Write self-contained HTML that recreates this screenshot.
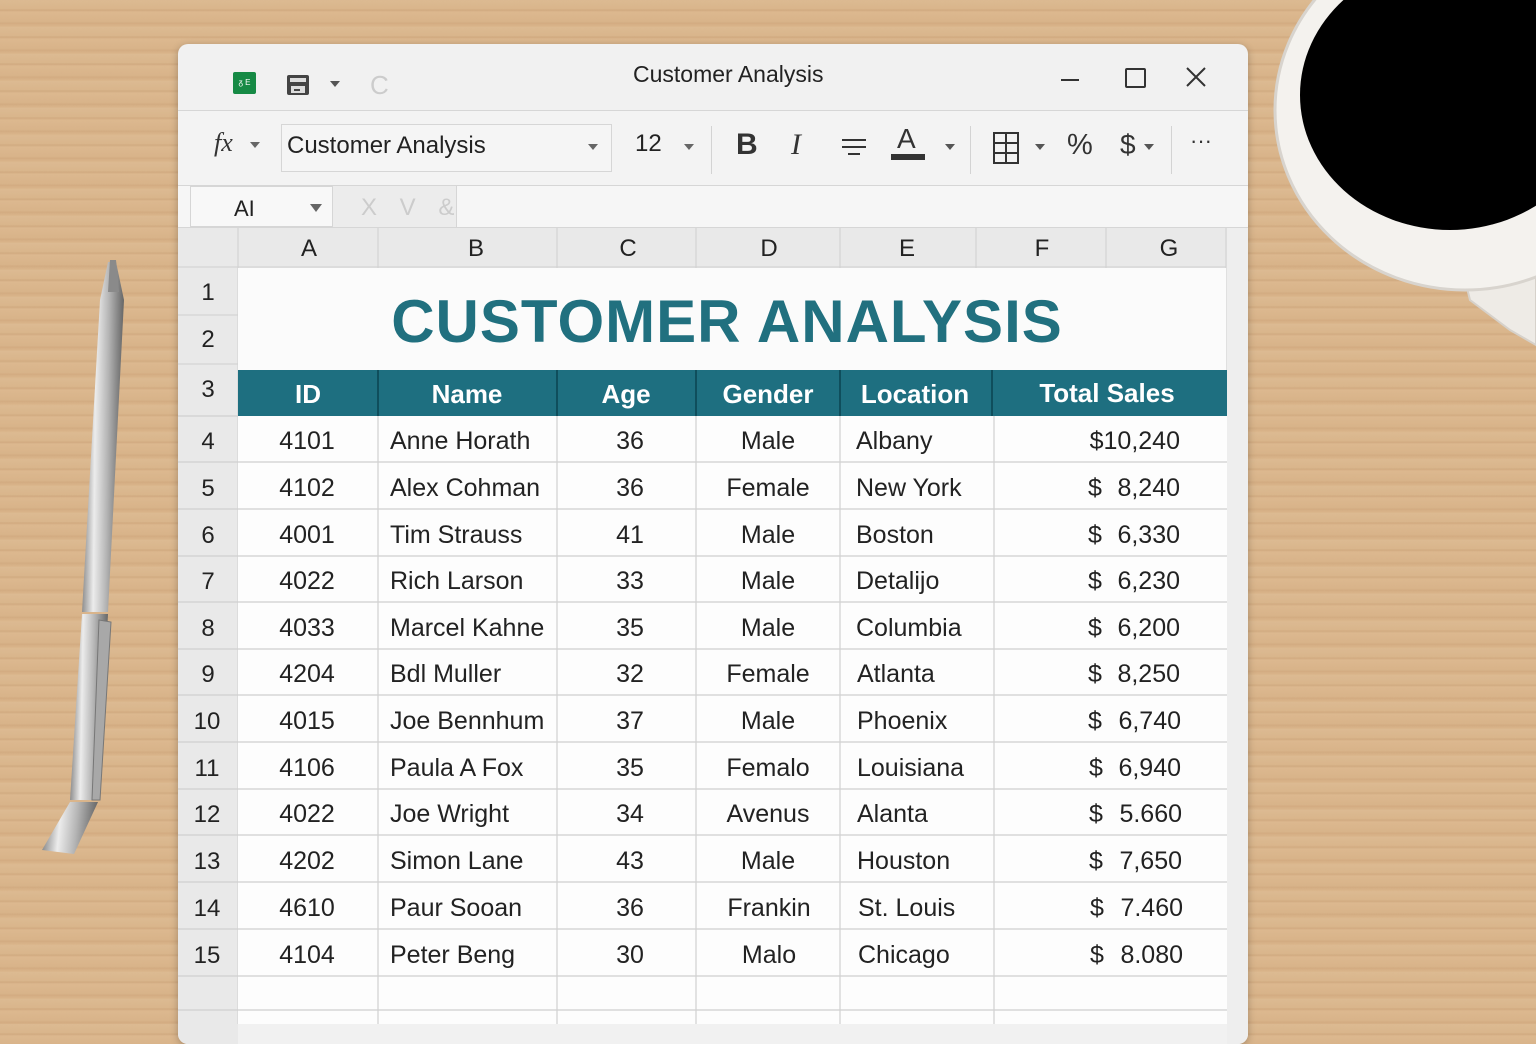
<!DOCTYPE html>
<html><head><meta charset="utf-8"><style>
*{margin:0;padding:0;box-sizing:border-box}
body{width:1536px;height:1024px;overflow:hidden;position:relative;font-family:"Liberation Sans","DejaVu Sans",sans-serif;
background:repeating-linear-gradient(180deg,#dcba92 0px,#d9b58b 9px,#d0a97f 10px,#dcb88f 12px,#d8b389 22px,#d2ab81 23px,#dbb78d 27px);}
.a{position:absolute}
.win{left:178px;top:44px;width:1070px;height:1000px;background:#f1f1f1;border-radius:10px;box-shadow:0 2px 8px rgba(0,0,0,.25);overflow:hidden}
.t{position:absolute;white-space:nowrap}
.hl{position:absolute;height:1px;background:#d3d3d3}
.vl{position:absolute;width:1px;background:#d3d3d3}
.tri{display:inline-block;width:0;height:0;border-left:5px solid transparent;border-right:5px solid transparent;border-top:6px solid #555}
</style></head><body>

<!-- pen -->
<svg class="a" style="left:0;top:0" width="200" height="900">
<defs><linearGradient id="pg" x1="0" x2="1" gradientTransform="rotate(5)"><stop offset="0" stop-color="#6f6f6f"/><stop offset=".35" stop-color="#ececec"/><stop offset=".65" stop-color="#b5b5b5"/><stop offset="1" stop-color="#676767"/></linearGradient></defs>
<path d="M108 262 L116 262 L124 300 L108 612 L82 612 L100 300 Z" fill="url(#pg)"/>
<path d="M82 614 L108 614 L98 800 L70 800 Z" fill="url(#pg)"/>
<path d="M70 802 L98 802 L74 854 L42 850 Z" fill="url(#pg)"/>
<path d="M110 260 L116 260 L119 292 L108 292 Z" fill="#8a8a8a"/>
<path d="M99 620 L111 622 L100 800 L92 800 Z" fill="#a8a8a8" stroke="#777" stroke-width="1"/>
</svg>

<!-- cup -->
<svg class="a" style="left:1270px;top:0" width="266" height="360">
<path d="M190 260 L266 265 L266 345 L240 330 L200 300 Z" fill="#eeebe6" stroke="#d6d1ca" stroke-width="2"/>
<ellipse cx="195" cy="110" rx="190" ry="180" fill="#f4f2ee"/>
<ellipse cx="195" cy="110" rx="190" ry="180" fill="none" stroke="#d8d4ce" stroke-width="3"/>
<ellipse cx="180" cy="95" rx="150" ry="135" fill="#000"/>
</svg>

<div class="a win">
 <div class="a" style="left:55px;top:28px;width:23px;height:22px;background:#168a45;border-radius:2px;color:#fff;font-size:8px;line-height:22px;text-align:center">ᵹ E</div>
 <svg class="a" style="left:108px;top:30px" width="24" height="22"><rect x="1" y="1" width="22" height="20" rx="2" fill="#444"/><rect x="4" y="4" width="16" height="4" fill="#ddd"/><rect x="5" y="12" width="14" height="7" fill="#ddd"/><rect x="8" y="15" width="6" height="2" fill="#444"/></svg>
 <div class="a tri" style="left:152px;top:37px"></div>
 <div class="t" style="left:192px;top:26px;font-size:26px;color:#ccc">C</div>
 <div class="t" style="left:455px;top:17px;font-size:23px;color:#222">Customer Analysis</div>
 <div class="a" style="left:883px;top:35px;width:18px;height:2px;background:#333"></div>
 <div class="a" style="left:947px;top:24px;width:21px;height:20px;border:2px solid #333;border-radius:2px"></div>
 <svg class="a" style="left:1008px;top:23px" width="20" height="20"><path d="M1 1L19 19M19 1L1 19" stroke="#333" stroke-width="2"/></svg>
 <div class="hl" style="left:0;top:66px;width:1070px;background:#d6d6d6"></div>

 <div class="a" style="left:0;top:67px;width:1070px;height:74px;background:#f3f3f3"></div>
 <div class="t" style="left:36px;top:84px;font-size:26px;font-style:italic;font-family:'Liberation Serif',serif;color:#333">fx</div>
 <div class="a tri" style="left:72px;top:98px;border-top-color:#666"></div>
 <div class="a" style="left:103px;top:80px;width:331px;height:48px;border:1px solid #d6d6d6;background:#f5f5f5"></div>
 <div class="t" style="left:109px;top:88px;font-size:24px;color:#222">Customer Analysis</div>
 <div class="a tri" style="left:410px;top:100px;border-top-color:#666"></div>
 <div class="t" style="left:457px;top:86px;font-size:24px;color:#222">12</div>
 <div class="a tri" style="left:506px;top:100px;border-top-color:#666"></div>
 <div class="vl" style="left:533px;top:82px;height:48px"></div>
 <div class="t" style="left:558px;top:84px;font-size:30px;font-weight:bold;color:#333">B</div>
 <div class="t" style="left:613px;top:84px;font-size:30px;font-style:italic;font-family:'Liberation Serif',serif;color:#333">I</div>
 <div class="a" style="left:664px;top:95px;width:24px;height:2px;background:#333"></div>
 <div class="a" style="left:664px;top:102px;width:24px;height:2px;background:#333"></div>
 <div class="a" style="left:670px;top:109px;width:12px;height:2px;background:#333"></div>
 <div class="t" style="left:719px;top:79px;font-size:28px;color:#333">A</div>
 <div class="a" style="left:713px;top:110px;width:34px;height:6px;background:#333"></div>
 <div class="a tri" style="left:767px;top:100px"></div>
 <div class="vl" style="left:792px;top:82px;height:48px"></div>
 <svg class="a" style="left:815px;top:88px" width="26" height="32"><rect x="1" y="1" width="24" height="30" fill="none" stroke="#333" stroke-width="2"/><path d="M13 1V31M1 11H25M1 21H25" stroke="#333" stroke-width="2"/></svg>
 <div class="a tri" style="left:857px;top:100px"></div>
 <div class="t" style="left:889px;top:85px;font-size:29px;color:#333">%</div>
 <div class="t" style="left:942px;top:85px;font-size:28px;color:#333">$</div>
 <div class="a tri" style="left:966px;top:100px"></div>
 <div class="vl" style="left:993px;top:82px;height:48px"></div>
 <div class="t" style="left:1012px;top:84px;font-size:22px;color:#333">···</div>
 <div class="hl" style="left:0;top:141px;width:1070px;background:#d6d6d6"></div>

 <div class="a" style="left:0;top:142px;width:1070px;height:41px;background:#f6f6f6"></div>
 <div class="a" style="left:12px;top:142px;width:143px;height:41px;border:1px solid #d6d6d6;background:#f8f8f8"></div>
 <div class="t" style="left:56px;top:152px;font-size:22px;color:#222">AI</div>
 <div class="a tri" style="left:132px;top:160px;border-left-width:6px;border-right-width:6px;border-top-width:8px;border-top-color:#666"></div>
 <div class="a" style="left:155px;top:142px;width:124px;height:41px;background:#ececec;border-right:1px solid #d6d6d6"></div>
 <div class="t" style="left:183px;top:150px;font-size:24px;color:#ccc;letter-spacing:8px">X V &amp;</div>
 <div class="hl" style="left:0;top:183px;width:1070px;background:#d6d6d6"></div>

 <div class="a" style="left:0;top:184px;width:1070px;height:40px;background:#e9e9e9"></div>
 <div class="a" style="left:0;top:224px;width:60px;height:800px;background:#e9e9e9"></div>
 <div class="a" style="left:1049px;top:184px;width:21px;height:820px;background:#eeeeee"></div>
</div>

<svg class="a" style="left:0;top:0" width="1536" height="1024" font-family="Liberation Sans, sans-serif">
 <g stroke="#d0d0d0" stroke-width="1">
  <line x1="238" y1="228" x2="238" y2="1024"/>
  <line x1="378" y1="228" x2="378" y2="268"/><line x1="557" y1="228" x2="557" y2="268"/><line x1="696" y1="228" x2="696" y2="268"/><line x1="840" y1="228" x2="840" y2="268"/><line x1="976" y1="228" x2="976" y2="268"/><line x1="1106" y1="228" x2="1106" y2="268"/><line x1="1226" y1="228" x2="1226" y2="1024"/>
  <line x1="178" y1="267" x2="1226" y2="267"/>
  <line x1="178" y1="315" x2="238" y2="315"/>
  <line x1="178" y1="364" x2="238" y2="364"/>
 </g>
 <rect x="238" y="268" width="988" height="102" fill="#fbfbfb"/>
 <g font-size="24" fill="#222" text-anchor="middle">
  <text x="309" y="256">A</text><text x="476" y="256">B</text><text x="628" y="256">C</text><text x="769" y="256">D</text><text x="907" y="256">E</text><text x="1042" y="256">F</text><text x="1169" y="256">G</text>
 </g>
 <text x="727" y="342" font-size="60" font-weight="bold" fill="#21707f" text-anchor="middle" letter-spacing="1">CUSTOMER ANALYSIS</text>
 <rect x="238" y="370" width="989" height="46" fill="#1e6f80"/>
 <g stroke="#0f4e5c" stroke-width="2"><line x1="378" y1="370" x2="378" y2="416"/><line x1="557" y1="370" x2="557" y2="416"/><line x1="696" y1="370" x2="696" y2="416"/><line x1="840" y1="370" x2="840" y2="416"/><line x1="992" y1="370" x2="992" y2="416"/></g>
 <g font-size="26" fill="#fff" font-weight="bold" text-anchor="middle">
  <text x="308" y="403">ID</text><text x="467" y="403">Name</text><text x="626" y="403">Age</text><text x="768" y="403">Gender</text><text x="915" y="403">Location</text><text x="1107" y="402">Total Sales</text>
 </g>
 <rect x="238" y="416" width="989" height="608" fill="#fdfdfd"/>
 <g stroke="#d0d0d0" stroke-width="1.2">
  <line x1="378" y1="416" x2="378" y2="1024"/><line x1="557" y1="416" x2="557" y2="1024"/><line x1="696" y1="416" x2="696" y2="1024"/><line x1="840" y1="416" x2="840" y2="1024"/><line x1="994" y1="416" x2="994" y2="1024"/>
  <line x1="178" y1="462" x2="1227" y2="462"/><line x1="178" y1="509" x2="1227" y2="509"/><line x1="178" y1="556" x2="1227" y2="556"/><line x1="178" y1="602" x2="1227" y2="602"/><line x1="178" y1="649" x2="1227" y2="649"/><line x1="178" y1="695" x2="1227" y2="695"/><line x1="178" y1="742" x2="1227" y2="742"/><line x1="178" y1="789" x2="1227" y2="789"/><line x1="178" y1="835" x2="1227" y2="835"/><line x1="178" y1="882" x2="1227" y2="882"/><line x1="178" y1="929" x2="1227" y2="929"/><line x1="178" y1="976" x2="1227" y2="976"/><line x1="178" y1="1010" x2="1227" y2="1010"/>
  <line x1="178" y1="416" x2="238" y2="416"/>
 </g>
 <g font-size="24" fill="#222" text-anchor="middle">
  <text x="208" y="300">1</text><text x="208" y="347">2</text><text x="208" y="397">3</text>
  <text x="208" y="449">4</text><text x="208" y="496">5</text><text x="208" y="543">6</text><text x="208" y="589">7</text><text x="208" y="636">8</text><text x="208" y="682">9</text><text x="207" y="729">10</text><text x="207" y="776">11</text><text x="207" y="822">12</text><text x="207" y="869">13</text><text x="207" y="916">14</text><text x="207" y="963">15</text>
 </g>
 <g font-size="25" fill="#222">
 <g text-anchor="middle">
  <text x="307" y="449">4101</text><text x="307" y="496">4102</text><text x="307" y="543">4001</text><text x="307" y="589">4022</text><text x="307" y="636">4033</text><text x="307" y="682">4204</text><text x="307" y="729">4015</text><text x="307" y="776">4106</text><text x="307" y="822">4022</text><text x="307" y="869">4202</text><text x="307" y="916">4610</text><text x="307" y="963">4104</text>
  <text x="630" y="449">36</text><text x="630" y="496">36</text><text x="630" y="543">41</text><text x="630" y="589">33</text><text x="630" y="636">35</text><text x="630" y="682">32</text><text x="630" y="729">37</text><text x="630" y="776">35</text><text x="630" y="822">34</text><text x="630" y="869">43</text><text x="630" y="916">36</text><text x="630" y="963">30</text>
  <text x="768" y="449">Male</text><text x="768" y="496">Female</text><text x="768" y="543">Male</text><text x="768" y="589">Male</text><text x="768" y="636">Male</text><text x="768" y="682">Female</text><text x="768" y="729">Male</text><text x="768" y="776">Femalo</text><text x="768" y="822">Avenus</text><text x="768" y="869">Male</text><text x="769" y="916">Frankin</text><text x="769" y="963">Malo</text>
 </g>
  <text x="390" y="449">Anne Horath</text><text x="390" y="496">Alex Cohman</text><text x="390" y="543">Tim Strauss</text><text x="390" y="589">Rich Larson</text><text x="390" y="636">Marcel Kahne</text><text x="390" y="682">Bdl Muller</text><text x="390" y="729">Joe Bennhum</text><text x="390" y="776">Paula A Fox</text><text x="390" y="822">Joe Wright</text><text x="390" y="869">Simon Lane</text><text x="390" y="916">Paur Sooan</text><text x="390" y="963">Peter Beng</text>
  <text x="856" y="449">Albany</text><text x="856" y="496">New York</text><text x="856" y="543">Boston</text><text x="856" y="589">Detalijo</text><text x="856" y="636">Columbia</text><text x="857" y="682">Atlanta</text><text x="857" y="729">Phoenix</text><text x="857" y="776">Louisiana</text><text x="857" y="822">Alanta</text><text x="857" y="869">Houston</text><text x="858" y="916">St. Louis</text><text x="858" y="963">Chicago</text>
 <g text-anchor="end">
  <text x="1180" y="449">$10,240</text><text x="1180" y="496">8,240</text><text x="1180" y="543">6,330</text><text x="1180" y="589">6,230</text><text x="1180" y="636">6,200</text><text x="1180" y="682">8,250</text><text x="1181" y="729">6,740</text><text x="1181" y="776">6,940</text><text x="1182" y="822">5.660</text><text x="1182" y="869">7,650</text><text x="1183" y="916">7.460</text><text x="1183" y="963">8.080</text>
 </g>
  <text x="1088" y="496">$</text><text x="1088" y="543">$</text><text x="1088" y="589">$</text><text x="1088" y="636">$</text><text x="1088" y="682">$</text><text x="1088" y="729">$</text><text x="1089" y="776">$</text><text x="1089" y="822">$</text><text x="1089" y="869">$</text><text x="1090" y="916">$</text><text x="1090" y="963">$</text>
 </g>
</svg>
</body></html>
